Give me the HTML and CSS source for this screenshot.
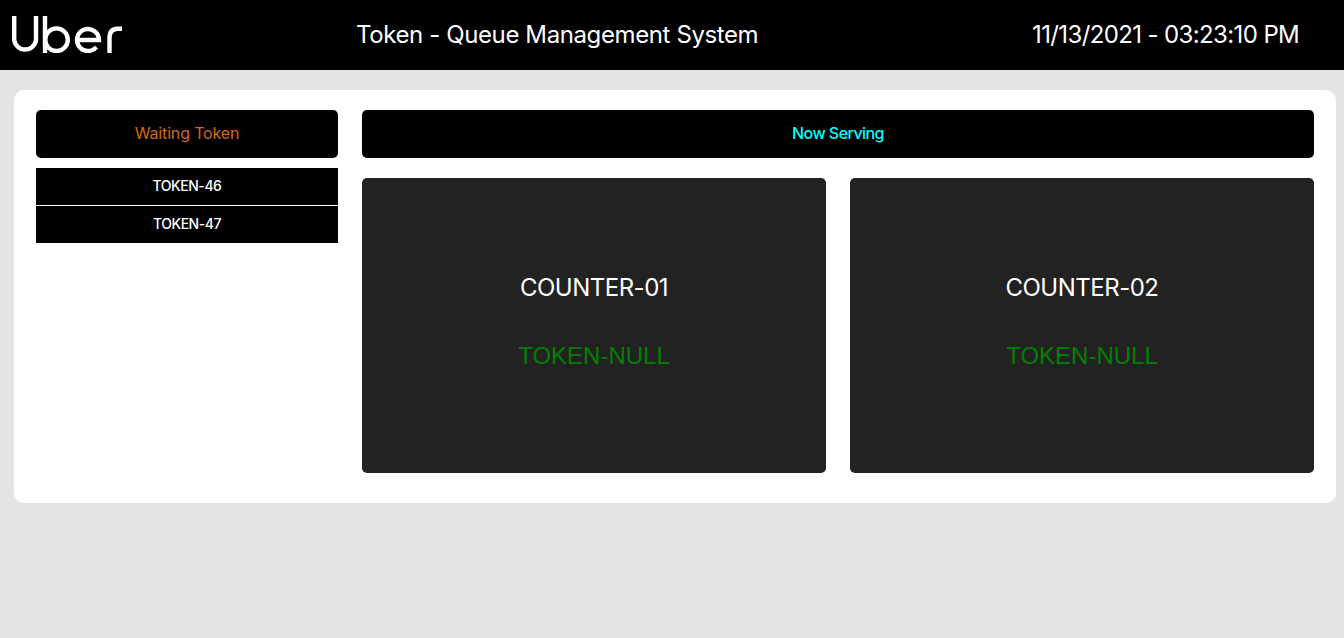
FILE: index.html
```html
<!DOCTYPE html>
<html lang="en">
<head>
<meta charset="utf-8">
<title>Token - Queue Management System</title>
<link rel="stylesheet" href="styles.css">
</head>
<body>
<header class="topbar">
  <svg class="logo" viewBox="0 0 110 37" role="img" aria-label="Uber" fill="none" stroke="#fff" stroke-width="4.4">
    <path d="M2.200 0V24A11 11 0 0 0 24 24V0"/>
    <path d="M33 0V37"/>
    <circle cx="44.500" cy="23.700" r="11.300"/>
    <path d="M65 24H87A11 11 0 1 0 84.400 31.100"/>
    <path d="M97.500 37V22C97.500 15 101.500 12.800 106 12.800H110"/>
  </svg>
  <h1 class="title">Token - Queue Management System</h1>
  <div class="clock">11/13/2021 - 03:23:10 PM</div>
</header>
<main class="board">
  <aside class="waiting">
    <div class="panel-head waiting-head">Waiting Token</div>
    <ul class="token-list">
      <li>TOKEN-46</li>
      <li>TOKEN-47</li>
    </ul>
  </aside>
  <section class="serving">
    <div class="panel-head serving-head">Now Serving</div>
    <div class="counters">
      <article class="counter">
        <h2>COUNTER-01</h2>
        <p>TOKEN-NULL</p>
      </article>
      <article class="counter">
        <h2>COUNTER-02</h2>
        <p>TOKEN-NULL</p>
      </article>
    </div>
  </section>
</main>
</body>
</html>
```
FILE: styles.css
```css
* { box-sizing: border-box; }
html, body { margin: 0; padding: 0; }
body {
  background: #e4e4e4;
  min-height: 638px;
  font-family: Inter, Roboto, "Liberation Sans", sans-serif;
}
.topbar {
  height: 70px;
  background: #000;
  color: #fff;
  display: grid;
  grid-template-columns: 336px 672px 336px;
  align-items: center;
}
.logo { width: 110px; height: 37px; margin: 0 0 1px 12px; }
.title { margin: 0 0 2px; padding-left: 20px; font-size: 24px; font-weight: 400; letter-spacing: -0.39px; }
.clock { margin-bottom: 2px; font-size: 24px; padding-left: 24px; letter-spacing: -0.62px; }
.board {
  margin: 20px 8px 0 14px;
  padding: 20px 22px 30px;
  background: #fff;
  border-radius: 10px;
  display: grid;
  grid-template-columns: 302px 952px;
  gap: 24px;
}
.panel-head {
  height: 48px;
  padding-bottom: 2px;
  background: #000;
  border-radius: 5px;
  display: flex;
  align-items: center;
  justify-content: center;
  font-size: 16px;
}
.waiting-head { color: #d2691e; letter-spacing: -0.15px; }
.serving-head { color: #0ff; font-weight: 500; letter-spacing: -0.55px; }
.token-list { list-style: none; margin: 10px 0 0; padding: 0; }
.token-list li {
  height: 37px;
  padding-bottom: 2px;
  background: #000;
  color: #fff;
  font-size: 14px;
  font-weight: 500;
  letter-spacing: -0.45px;
  display: flex;
  align-items: center;
  justify-content: center;
}
.token-list li + li { margin-top: 1px; }
.counters {
  margin-top: 20px;
  display: grid;
  grid-template-columns: 464px 464px;
  gap: 24px;
}
.counter {
  height: 295px;
  background: #222;
  border-radius: 5px;
  display: flex;
  flex-direction: column;
  align-items: center;
  padding-top: 95px;
}
.counter h2 { margin: 0; color: #fff; font-size: 24px; font-weight: 400; line-height: 30px; letter-spacing: -0.5px; }
.counter p { margin: 38px 0 0; color: #008000; font-size: 24px; line-height: 30px; font-family: "Liberation Sans", sans-serif; }
```
